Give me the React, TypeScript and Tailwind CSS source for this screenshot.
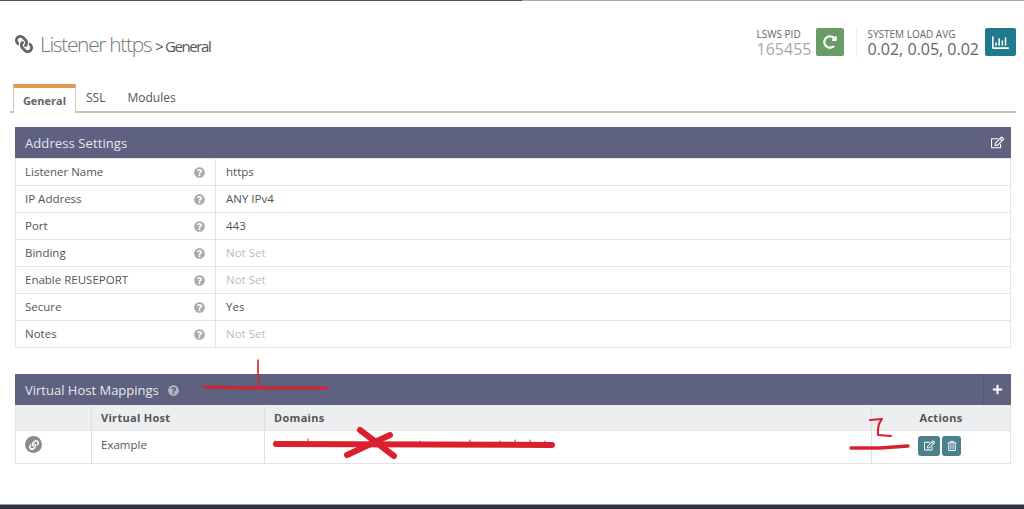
import { FaLink, FaPlus, FaQuestionCircle, FaRegChartBar, FaRegEdit, FaRedoAlt, FaRegTrashAlt } from "react-icons/fa";

const rows = [
  { label: "Listener Name", value: "https" },
  { label: "IP Address", value: "ANY IPv4" },
  { label: "Port", value: "443" },
  { label: "Binding", value: "Not Set", muted: true },
  { label: "Enable REUSEPORT", value: "Not Set", muted: true },
  { label: "Secure", value: "Yes" },
  { label: "Notes", value: "Not Set", muted: true },
];

function Annotations() {
  return (
    <svg className="pointer-events-none absolute left-0 top-0" width="1024" height="509" fill="none" stroke="#d9202c" strokeLinecap="round" strokeLinejoin="round">
      {/* 1 */}
      <path d="M258 360 L258 375 L259 386" strokeWidth="1.6" />
      <path d="M204 387 L262 388 L326 388" strokeWidth="3" />
      {/* redacted domains */}
      <path d="M276 444 L552 445" strokeWidth="6" />
      <path d="M360 430 L394 456" strokeWidth="6" />
      <path d="M390 435 L347 455" strokeWidth="6" />
      <path d="M275 441 L275 443 M308 439 L308 443 M420 441 L420 443 M470 440 L470 444 M500 441 L500 443 M515 440 L515 443 M530 440 L530 443 M545 441 L545 443" strokeWidth="1" />
      {/* 2 */}
      <path d="M870 420 L882 419 Q877 425 878 435 L891 436" strokeWidth="2" />
      <path d="M851 448 L880 448 L908 446" strokeWidth="3.4" />
    </svg>
  );
}

export default function App() {
  return (
    <div className="relative flex h-[509px] w-[1024px] flex-col overflow-hidden bg-white font-['Open_Sans',sans-serif] text-[#555]">
      <div className="flex h-px shrink-0">
        <div className="w-[522px] bg-[#555]" />
        <div className="flex-1 bg-[#aaa]" />
      </div>

      <header className="flex h-[83px] shrink-0 items-start pl-[15px] pr-2">
        <div className="mt-[28px] flex items-baseline text-[#777]">
          <FaLink className="mr-[7px] size-[18px] -scale-x-100 self-center text-[#666]" />
          <span className="text-[21px] font-light leading-[30px] tracking-[-1.35px]">Listener https</span>
          <span className="ml-[4px] text-[15px] tracking-[-1.4px] text-[#555]">&gt; General</span>
        </div>
        <div className="ml-auto mt-[27px] flex items-start">
          <div className="mr-[5px] flex flex-col items-start">
            <span className="text-[10px] leading-[12px] text-[#666]">LSWS PID</span>
            <span className="text-[16px] leading-[19px] text-[#aaa]">165455</span>
          </div>
          <div className="flex size-[28px] items-center justify-center rounded-[2px] bg-[#6a9c68] text-white">
            <FaRedoAlt className="size-[14px]" />
          </div>
          <div className="ml-3 mr-[10px] h-[29px] w-px bg-[#eee]" />
          <div className="mr-[6px] flex flex-col items-start">
            <span className="text-[10px] leading-[12px] text-[#666]">SYSTEM LOAD AVG</span>
            <span className="text-[16px] leading-[19px] text-[#666]">0.02, 0.05, 0.02</span>
          </div>
          <div className="flex h-[28px] w-[31px] items-center justify-center rounded-[2px] bg-[#1f7a8c] text-white">
            <FaRegChartBar className="size-[17px]" />
          </div>
        </div>
      </header>

      <nav className="ml-[10px] mr-2 flex h-[29px] shrink-0 items-end border-b-2 border-[#c4c4c4]">
        <div className="ml-[3px] -mb-[2px] flex h-[29px] w-[63px] items-center justify-center border-x border-[#c8c8c8] border-t-[4px] border-t-[#e09a50] bg-white pt-[2px] text-[11px] font-bold text-[#666]">
          General
        </div>
        <div className="ml-[10px] h-[22px] text-[12px] leading-[18px] text-[#555]">SSL</div>
        <div className="ml-[22px] h-[22px] text-[12px] leading-[18px] text-[#555]">Modules</div>
      </nav>

      <section className="ml-[15px] mr-[13px] mt-[14px] shrink-0">
        <div className="flex h-[31px] items-center justify-between bg-[#5e6180] pl-[10px] pr-[7px] pt-[2px] text-[13px] tracking-[0.1px] text-[#e6e7ee]">
          <span>Address Settings</span>
          <FaRegEdit className="-mt-[2px] size-[13px] text-white" />
        </div>
        <div className="border-x border-t border-[#e6e6e6]">
          {rows.map((row) => (
            <div key={row.label} className="flex h-[27px] border-b border-[#e3e3e3] text-[11.5px]">
              <div className="flex w-[200px] shrink-0 items-center justify-between border-r border-[#e3e3e3] pl-[9px] pr-[10px] text-[#555]">
                <span>{row.label}</span>
                <FaQuestionCircle className="size-[11px] text-[#aaa]" />
              </div>
              <div className={row.muted ? "flex items-center pl-[10px] text-[#bbb]" : "flex items-center pl-[10px] text-[#555]"}>
                {row.value}
              </div>
            </div>
          ))}
        </div>
      </section>

      <section className="ml-[15px] mr-[13px] mt-[26px] shrink-0">
        <div className="flex h-[31px] items-center bg-[#5e6180] pl-[10px] pt-[2px] text-[13px] text-[#e6e7ee]">
          <span>Virtual Host Mappings</span>
          <FaQuestionCircle className="ml-[9px] size-[11px] text-[#b5b6c4]" />
          <div className="ml-auto -mt-[2px] flex h-[31px] w-[28px] items-center justify-center border-l border-[#555875] pr-[1px]">
            <FaPlus className="size-[11px] text-white" />
          </div>
        </div>
        <div className="flex h-[26px] items-center border-x border-b border-[#e3e3e3] bg-[#eceeef] pt-[1px] text-[11px] font-bold tracking-[0.3px] text-[#555]">
          <div className="h-full w-[76px] border-r border-[#e0e0e0]" />
          <div className="flex h-full w-[173px] items-center border-r border-[#e0e0e0] pl-[9px]">Virtual Host</div>
          <div className="flex h-full w-[607px] items-center border-r border-[#e0e0e0] pl-[9px]">Domains</div>
          <div className="flex h-full flex-1 items-center justify-center">Actions</div>
        </div>
        <div className="flex h-[33px] items-center border-x border-b border-[#e3e3e3] text-[11.5px] text-[#555]">
          <div className="flex h-full w-[76px] items-center border-r border-[#e0e0e0] pb-[5px] pl-[9px]">
            <div className="flex size-[17px] items-center justify-center rounded-full bg-[#8a8a8a]">
              <FaLink className="size-[10px] text-white" />
            </div>
          </div>
          <div className="flex h-full w-[173px] items-center border-r border-[#e0e0e0] pb-[5px] pl-[9px]">Example</div>
          <div className="h-full w-[607px] border-r border-[#e0e0e0]" />
          <div className="flex h-full flex-1 items-center justify-center gap-[2px] pb-[3px] pr-[3px]">
            <div className="flex h-[20px] w-[22px] items-center justify-center rounded-[3px] bg-[#4b7f8c] text-white">
              <FaRegEdit className="size-[11px]" />
            </div>
            <div className="flex h-[20px] w-[19px] items-center justify-center rounded-[3px] bg-[#4b7f8c] text-white">
              <FaRegTrashAlt className="size-[10px]" />
            </div>
          </div>
        </div>
      </section>

      <footer className="mt-auto h-[5px] shrink-0 border-t border-[#999] bg-[#2e3142]" />
      <Annotations />
    </div>
  );
}
